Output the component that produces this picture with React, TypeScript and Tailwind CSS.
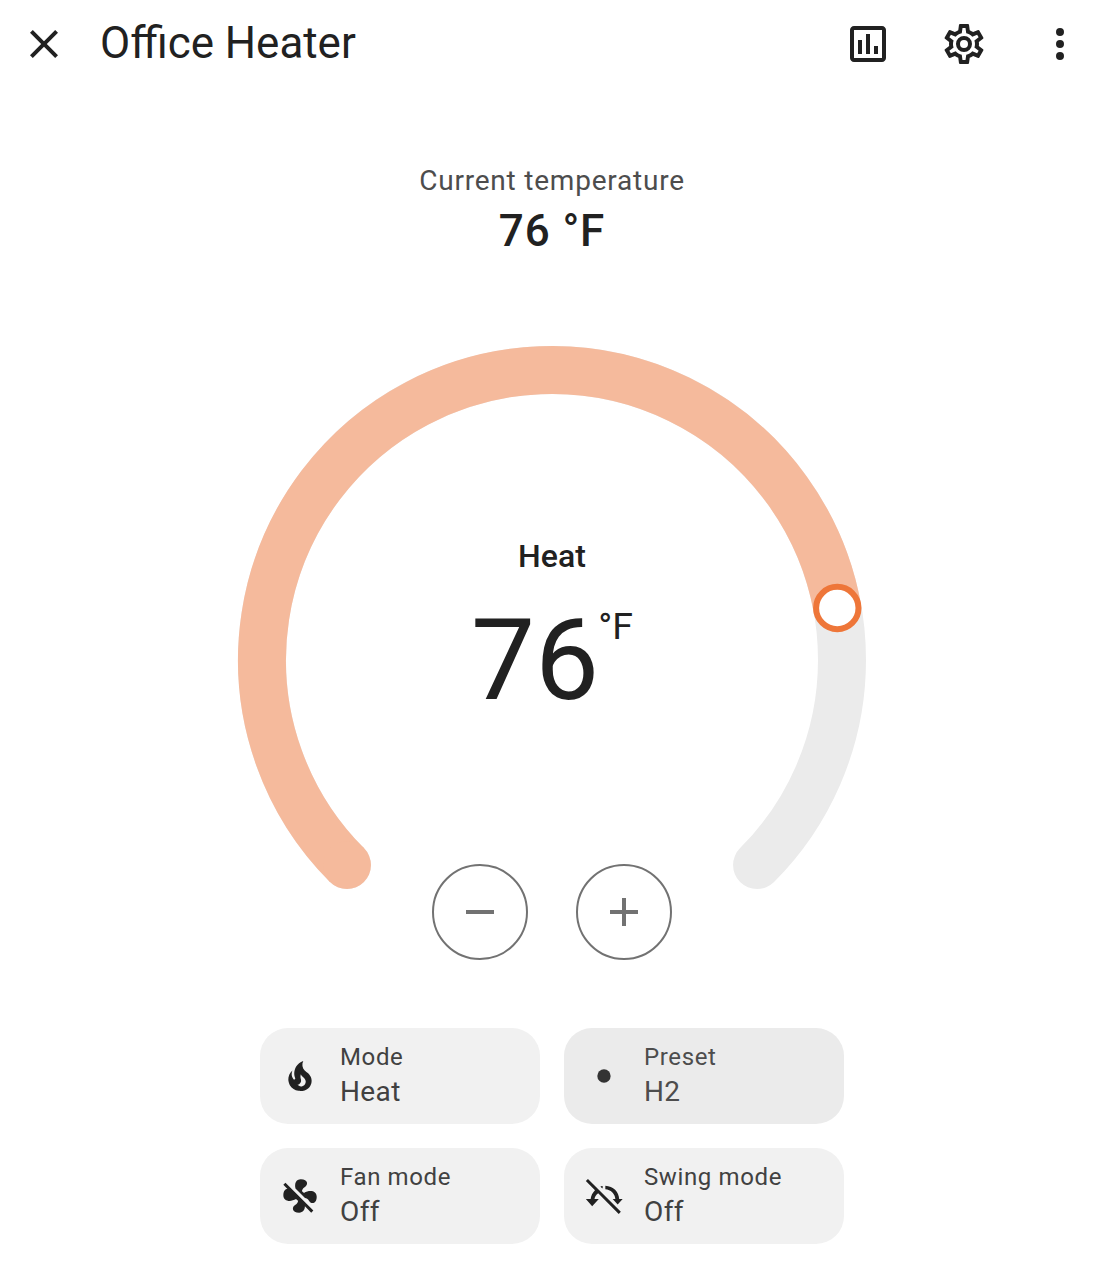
import type { ReactNode } from "react";

const paths = {
  close:
    "M19,6.41L17.59,5L12,10.59L6.41,5L5,6.41L10.59,12L5,17.59L6.41,19L12,13.41L17.59,19L19,17.59L13.41,12L19,6.41Z",
  chart:
    "M9 17H7V10H9V17M13 17H11V7H13V17M17 17H15V13H17V17M19 19H5V5H19V19.1M19 3H5C3.9 3 3 3.9 3 5V19C3 20.1 3.9 21 5 21H19C20.1 21 21 20.1 21 19V5C21 3.9 20.1 3 19 3Z",
  cog: "M12,8A4,4 0 0,1 16,12A4,4 0 0,1 12,16A4,4 0 0,1 8,12A4,4 0 0,1 12,8M12,10A2,2 0 0,0 10,12A2,2 0 0,0 12,14A2,2 0 0,0 14,12A2,2 0 0,0 12,10M10,22C9.75,22 9.54,21.82 9.5,21.58L9.13,18.93C8.5,18.68 7.96,18.34 7.44,17.94L4.95,18.95C4.73,19.03 4.46,18.95 4.34,18.73L2.34,15.27C2.21,15.05 2.27,14.78 2.46,14.63L4.57,12.97L4.5,12L4.57,11L2.46,9.37C2.27,9.22 2.21,8.95 2.34,8.73L4.34,5.27C4.46,5.05 4.73,4.96 4.95,5.05L7.44,6.05C7.96,5.66 8.5,5.32 9.13,5.07L9.5,2.42C9.54,2.18 9.75,2 10,2H14C14.25,2 14.46,2.18 14.5,2.42L14.87,5.07C15.5,5.32 16.04,5.66 16.56,6.05L19.05,5.05C19.27,4.96 19.54,5.05 19.66,5.27L21.66,8.73C21.79,8.95 21.73,9.22 21.54,9.37L19.43,11L19.5,12L19.43,13L21.54,14.63C21.73,14.78 21.79,15.05 21.66,15.27L19.66,18.73C19.54,18.95 19.27,19.04 19.05,18.95L16.56,17.95C16.04,18.34 15.5,18.68 14.87,18.93L14.5,21.58C14.46,21.82 14.25,22 14,22H10M11.25,4L10.88,6.61C9.68,6.86 8.62,7.5 7.85,8.39L5.44,7.35L4.69,8.65L6.8,10.2C6.4,11.37 6.4,12.64 6.8,13.8L4.68,15.36L5.43,16.66L7.86,15.62C8.63,16.5 9.68,17.14 10.87,17.38L11.24,20H12.76L13.13,17.39C14.32,17.14 15.37,16.5 16.14,15.62L18.57,16.66L19.32,15.36L17.2,13.81C17.6,12.64 17.6,11.37 17.2,10.2L19.31,8.65L18.56,7.35L16.15,8.39C15.38,7.5 14.32,6.86 13.12,6.62L12.75,4H11.25Z",
  dots: "M12,16A2,2 0 0,1 14,18A2,2 0 0,1 12,20A2,2 0 0,1 10,18A2,2 0 0,1 12,16M12,10A2,2 0 0,1 14,12A2,2 0 0,1 12,14A2,2 0 0,1 10,12A2,2 0 0,1 12,10M12,4A2,2 0 0,1 14,6A2,2 0 0,1 12,8A2,2 0 0,1 10,6A2,2 0 0,1 12,4Z",
  minus: "M19,13H5V11H19V13Z",
  plus: "M19,13H13V19H11V13H5V11H11V5H13V11H19V13Z",
  fire: "M17.66 11.2C17.43 10.9 17.15 10.64 16.89 10.38C16.22 9.78 15.46 9.35 14.82 8.72C13.33 7.26 13 4.85 13.95 3C13 3.23 12.17 3.75 11.46 4.32C8.87 6.4 7.85 10.07 9.07 13.22C9.11 13.32 9.15 13.42 9.15 13.55C9.15 13.77 9 13.97 8.8 14.05C8.57 14.15 8.33 14.09 8.14 13.93C8.08 13.88 8.04 13.83 8 13.76C6.87 12.33 6.69 10.28 7.45 8.64C5.78 10 4.87 12.3 5 14.47C5.06 14.97 5.12 15.47 5.29 15.97C5.43 16.57 5.7 17.17 6 17.7C7.08 19.43 8.95 20.67 10.96 20.92C13.1 21.19 15.39 20.8 17.03 19.32C18.86 17.66 19.5 15 18.56 12.72L18.43 12.46C18.22 12 17.66 11.2 17.66 11.2M14.5 17.5C14.22 17.74 13.76 18 13.4 18.1C12.28 18.5 11.16 17.94 10.5 17.28C11.69 17 12.4 16.12 12.61 15.23C12.78 14.43 12.46 13.77 12.33 13C12.21 12.26 12.23 11.63 12.5 10.94C12.69 11.32 12.89 11.7 13.13 12C13.9 13 15.11 13.44 15.37 14.8C15.41 14.94 15.43 15.08 15.43 15.23C15.46 16.05 15.1 16.95 14.5 17.5H14.5Z",
  dot: "M12,8A4,4 0 0,0 8,12A4,4 0 0,0 12,16A4,4 0 0,0 16,12A4,4 0 0,0 12,8Z",
  fanOff:
    "M12.5,2C9.64,2 8.57,4.55 9.29,7.47L15,13.16C15.87,13.37 16.81,13.81 17.28,14.73C18.46,17.1 22.03,17 22.03,12.5C22.03,8.92 18.05,8.13 14.35,10.13C14.03,9.73 13.61,9.42 13.13,9.22C13.32,8.29 13.76,7.24 14.75,6.75C17.11,5.57 17,2 12.5,2M3.28,4L2,5.27L4.47,7.73C3.22,7.74 2,8.87 2,11.5C2,15.07 5.96,15.85 9.65,13.87C9.97,14.27 10.4,14.59 10.89,14.79C10.69,15.71 10.25,16.75 9.27,17.24C6.91,18.42 7,22 11.5,22C13.8,22 14.94,20.36 14.94,18.21L18.73,22L20,20.72L3.28,4Z",
  swingOff:
    "M22.11 21.46L20.84 22.73L8.5 10.39C7.2 11.3 6.4 12.6 6.3 13.8H8.9L4.9 18.1L1.1 13.8H4C4.1 11.8 5.2 9.9 6.6 8.49L1.11 3L2.39 1.73L22.11 21.46M10 6.2L11.2 6V7.3H10.8L10 6.5ZM12.8 5.8C17.6 6 20.9 9.5 21.1 13.8H23.2L20.2 17.1L17.2 13.8H18.8C18.6 10.6 16 8.3 12.8 8V5.8Z",
};

function Icon({ d, className }: { d: string; className: string }) {
  return (
    <svg viewBox="0 0 24 24" fill="currentColor" className={className} aria-hidden="true">
      <path d={d} />
    </svg>
  );
}

function Header() {
  return (
    <header className="flex h-[88px] items-center pl-5 pr-[10px]">
      <button aria-label="Close">
        <Icon d={paths.close} className="size-12" />
      </button>
      <h1 className="ml-8 flex-1 text-[43.9px] leading-[56px] -mt-[2px]">Office Heater</h1>
      <div className="flex gap-12">
        <button aria-label="History">
          <Icon d={paths.chart} className="size-12" />
        </button>
        <button aria-label="Settings">
          <Icon d={paths.cog} className="size-12" />
        </button>
        <button aria-label="More">
          <Icon d={paths.dots} className="size-12" />
        </button>
      </div>
    </header>
  );
}

function RoundButton({ label, children }: { label: string; children: ReactNode }) {
  return (
    <button
      aria-label={label}
      className="flex size-24 items-center justify-center rounded-full border-2 border-[#727272] text-[#727272]"
    >
      {children}
    </button>
  );
}

function Dial() {
  return (
    <section className="relative mt-[81px] h-[640px] w-[640px]">
      <svg viewBox="-320 -320 640 640" className="size-[640px]" fill="none" aria-hidden="true">
        <path
          d="M-205.06 205.06A290 290 0 1 1 205.06 205.06"
          stroke="#ebebeb"
          strokeWidth="48"
          strokeLinecap="round"
        />
        <path d="M285.3 -52A290 290 0 1 0 -205.06 205.06" stroke="#f5ba9c" strokeWidth="48" />
        <path d="M-205.06 205.06h.01" stroke="#f5ba9c" strokeWidth="48" strokeLinecap="round" />
        <circle cx="285.3" cy="-52" r="21.2" fill="#fff" stroke="#ee7639" strokeWidth="6" />
      </svg>
      <div className="absolute inset-0 flex flex-col items-center">
        <p className="mt-[196px] text-[32px] font-medium leading-10 tracking-[0.1px]">Heat</p>
        <div className="mt-[24px] flex h-[120px]">
          <span className="text-[114px] leading-[120px]">76</span>
          <span className="-ml-px mt-[6px] text-[37.5px] leading-[41px]">°F</span>
        </div>
        <div className="mt-[144px] flex gap-12">
          <RoundButton label="Decrease temperature">
            <Icon d={paths.minus} className="size-12" />
          </RoundButton>
          <RoundButton label="Increase temperature">
            <Icon d={paths.plus} className="size-12" />
          </RoundButton>
        </div>
      </div>
    </section>
  );
}

function Tile({ icon, label, value, muted }: { icon: string; label: string; value: string; muted?: boolean }) {
  return (
    <button
      className={`flex h-24 items-center rounded-[28px] pl-5 text-left ${
        muted ? "bg-[#ebebeb] text-[#4d4d4d]" : "bg-[#f1f1f1] text-[#414141]"
      }`}
    >
      <Icon d={icon} className={muted ? "size-10 text-[#333333]" : "size-10 text-[#212121]"} />
      <span className="-mt-px ml-5 flex flex-col">
        <span className="text-[24px] leading-8 tracking-[0.62px]">{label}</span>
        <span className="mt-px text-[28px] leading-9 tracking-[0.4px]">{value}</span>
      </span>
    </button>
  );
}

export default function App() {
  return (
    <main className="h-[1276px] w-[1094px] overflow-hidden bg-white font-['Roboto',sans-serif] text-[#212121]">
      <Header />
      <div className="flex flex-col items-center pl-[10px]">
        <div className="mt-[73px] flex flex-col items-center">
          <p className="text-[28px] leading-10 tracking-[0.78px] text-[#4d4d4d]">Current temperature</p>
          <p className="mt-[2px] text-[44px] font-medium leading-[56px] tracking-[0.9px]">76 °F</p>
        </div>
        <Dial />
        <div className="mt-12 grid grid-cols-[280px_280px] gap-6">
          <Tile icon={paths.fire} label="Mode" value="Heat" />
          <Tile icon={paths.dot} label="Preset" value="H2" muted />
          <Tile icon={paths.fanOff} label="Fan mode" value="Off" />
          <Tile icon={paths.swingOff} label="Swing mode" value="Off" />
        </div>
      </div>
    </main>
  );
}
